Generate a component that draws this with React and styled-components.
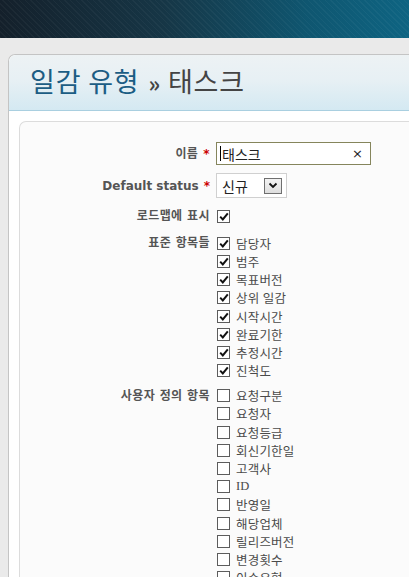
import styled, { createGlobalStyle } from 'styled-components';

const Global = createGlobalStyle`
  html, body {
    margin: 0;
    padding: 0;
    background: #e9e9e9;
    overflow: hidden;
  }
  body {
    font-family: "Noto Sans CJK KR", "DejaVu Sans", sans-serif;
  }
`;

const TopBar = styled.div`
  height: 38px;
  background:
    repeating-linear-gradient(45deg, rgba(255,255,255,0.035) 0 1px, transparent 1px 4px),
    linear-gradient(90deg, #14202b 0%, #163646 40%, #0f5670 75%, #0e6482 100%);
`;

const Page = styled.div`
  padding: 16px 0 0 8px;
  height: 523px;
  background: #eaeaea;
`;

const Panel = styled.div`
  border: 1px solid #c4c4c4;
  border-right: none;
  border-bottom: none;
  border-top-left-radius: 7px;
  background: #fff;
  height: 100%;
  overflow: hidden;
`;

const TitleBand = styled.div`
  height: 55px;
  border-bottom: 1px solid #a9cfe0;
  background: linear-gradient(180deg, #edf2f4 0%, #e7f0f4 45%, #d4e9f2 100%);
  border-top-left-radius: 7px;
  display: flex;
  align-items: center;
  padding-left: 21px;
`;

const Title = styled.h1`
  margin: 0 0 4px;
  font-size: 27px;
  font-weight: 400;
  color: #444;
  letter-spacing: 0.8px;

  span {
    color: #1c5d84;
  }
  em {
    font-style: normal;
    font-weight: 700;
    font-size: 22px;
    padding: 0 7px 0 9px;
  }
`;

const Body = styled.div`
  padding: 10px 0 0 10px;
`;

const Box = styled.div`
  border: 1px solid #dcdcdc;
  border-right: none;
  border-bottom: none;
  border-top-left-radius: 7px;
  background: #fbfbfb;
  height: 480px;
  padding-top: 20px;
`;

const Row = styled.div`
  display: grid;
  grid-template-columns: 190px 1fr;
  column-gap: 6px;
  align-items: ${p => (p.$top ? 'start' : 'center')};
  margin-bottom: ${p => p.$gap || 0}px;
`;

const Label = styled.label`
  text-align: right;
  font-size: 12px;
  font-weight: 700;
  color: #555;
  line-height: 18px;
  white-space: nowrap;
  font-family: "DejaVu Sans", "Noto Sans CJK KR", sans-serif;

  &:lang(ko) {
    letter-spacing: 0.4px;
  }
`;

const Req = styled.span`
  color: #c00;
  margin-left: 5px;
`;

const TextInput = styled.div`
  box-sizing: border-box;
  width: 155px;
  height: 23px;
  border: 1px solid #85855c;
  background: #fff;
  display: flex;
  align-items: center;
  padding: 0 7px 0 3px;
  font-size: 14px;
  color: #222;

  b {
    width: 1px;
    height: 15px;
    background: #000;
    margin-right: 1px;
  }
  i {
    margin-left: auto;
    font-style: normal;
    font-size: 13px;
    font-family: "DejaVu Sans", sans-serif;
  }
`;

const Select = styled.div`
  box-sizing: border-box;
  width: 71px;
  height: 25px;
  border: 1px solid #d0d0d0;
  background: #fff;
  display: flex;
  align-items: center;
  padding: 0 4px 0 5px;
  font-size: 14px;
  color: #222;
`;

const Arrow = styled.span`
  box-sizing: border-box;
  margin-left: auto;
  width: 18px;
  height: 16px;
  border: 1px solid #6f6f6f;
  background: linear-gradient(#f2f2f2, #dedede);
  display: flex;
  align-items: center;
  justify-content: center;
`;

const List = styled.div`
  display: flex;
  flex-direction: column;
`;

const Item = styled.div`
  display: flex;
  align-items: center;
  height: 18.2px;
  font-size: 12.5px;
  color: #4a4a4a;
  gap: 6px;
  white-space: nowrap;
  font-family: "Liberation Serif", "Noto Sans CJK KR", serif;
  letter-spacing: 0.2px;
`;

const Check = styled.span`
  width: 11px;
  height: 11px;
  border: 1px solid #5c5c5c;
  background: #fff;
  display: inline-flex;
  align-items: center;
  justify-content: center;
  flex: none;
  margin-left: 1px;
`;

const CheckBox = ({ on }) => (
  <Check>
    {on && (
      <svg width="10" height="9" viewBox="0 0 10 9">
        <path d="M1.2 4.6 L3.8 7.4 L8.8 1.4" fill="none" stroke="#111" strokeWidth="2" />
      </svg>
    )}
  </Check>
);

const standard = ['담당자', '범주', '목표버전', '상위 일감', '시작시간', '완료기한', '추정시간', '진척도'];
const custom = ['요청구분', '요청자', '요청등급', '회신기한일', '고객사', 'ID', '반영일', '해당업체', '릴리즈버전', '변경횟수', '이슈유형'];

export default function App() {
  return (
    <>
      <Global />
      <TopBar />
      <Page>
        <Panel>
          <TitleBand>
            <Title>
              <span>일감 유형</span>
              <em>»</em>태스크
            </Title>
          </TitleBand>
          <Body>
            <Box>
              <Row $gap={8}>
                <Label lang="ko">
                  이름<Req>*</Req>
                </Label>
                <TextInput>
                  <b />
                  태스크
                  <i>×</i>
                </TextInput>
              </Row>
              <Row $gap={9}>
                <Label>
                  Default status<Req>*</Req>
                </Label>
                <Select>
                  신규
                  <Arrow>
                    <svg width="10" height="7" viewBox="0 0 10 7">
                      <path d="M1.5 1.5 L5 5 L8.5 1.5" fill="none" stroke="#111" strokeWidth="1.8" />
                    </svg>
                  </Arrow>
                </Select>
              </Row>
              <Row $gap={9}>
                <Label lang="ko">로드맵에 표시</Label>
                <List>
                  <Item>
                    <CheckBox on />
                  </Item>
                </List>
              </Row>
              <Row $top $gap={7}>
                <Label lang="ko">표준 항목들</Label>
                <List>
                  {standard.map(s => (
                    <Item key={s}>
                      <CheckBox on />
                      {s}
                    </Item>
                  ))}
                </List>
              </Row>
              <Row $top>
                <Label lang="ko">사용자 정의 항목</Label>
                <List>
                  {custom.map(s => (
                    <Item key={s}>
                      <CheckBox />
                      {s}
                    </Item>
                  ))}
                </List>
              </Row>
            </Box>
          </Body>
        </Panel>
      </Page>
    </>
  );
}
